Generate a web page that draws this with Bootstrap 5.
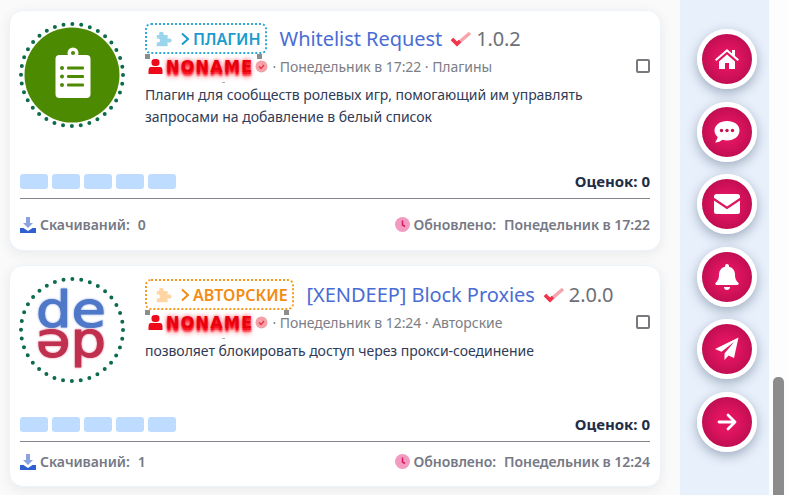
<!DOCTYPE html>
<html lang="ru">
<head>
    <meta charset="UTF-8">
    <meta name="viewport" content="width=device-width, initial-scale=1.0">
    <title>Ресурсы</title>
    <link href="https://cdn.jsdelivr.net/npm/bootstrap@5.3.0/dist/css/bootstrap.min.css" rel="stylesheet">
    <style>
        html, body { height: 100%; overflow: hidden; }
        body {
            background: #fdfdfd;
            font-family: "Noto Sans", "Open Sans", sans-serif;
            font-size: 14px;
            color: #2e3a55;
        }
        .page-wrap { height: 495px; }
        .res-col { width: 680px; padding: 10px 19px 0 9px; background: #fafafa; }
        .res-card {
            border: 1px solid #edf3fd;
            border-radius: 14px;
            box-shadow: 0 3px 12px rgba(60, 70, 90, .09);
            padding: 10px 10px 15px 10px;
            margin-bottom: 14px;
            background: #fff;
        }
        .res-card.first { height: 241px; }
        .res-card.second { height: 222px; padding-bottom: 14px; }
        .res-logo { width: 108px; height: 108px; flex: none; margin-left: -2px; }
        .res-main { margin-left: 19px; margin-top: 2px; min-width: 0; }
        .second .res-main { margin-top: 3px; }
        .logo-blue { filter: drop-shadow(0 0 1px #8fabe6); }
        .logo-red { filter: drop-shadow(0 0 1px #e67f96); }
        .type-tag {
            position: relative;
            height: 31px;
            padding: 0 4px 0 8px;
            border: 2px dotted #2ea8d6;
            border-radius: 6px;
            font-size: 16px;
            font-weight: 600;
            color: #1b9ccd;
            white-space: nowrap;
        }
        .type-tag.orange { border-color: #f7991f; color: #f28c13; }
        .handle { position: absolute; width: 5px; height: 5px; background: #8d8d8d; bottom: -7px; }
        .handle.l { left: -2px; }
        .handle.r { right: 3px; }
        .res-title { font-size: 20px; color: #4a6cd4; margin-left: 13px; white-space: nowrap; line-height: 28px; letter-spacing: -.05px; }
        .res-ver { font-size: 20px; color: #6c6f76; margin-left: 4px; line-height: 28px; letter-spacing: -.1px; }
        .meta-row { height: 24px; color: #7b7e85; font-size: 14px; letter-spacing: -.05px; }
        .user-ico { margin: 0 3px; flex: none; }
        .verify-ico { margin-left: 2px; flex: none; }
        .nick {
            position: relative;
            font-family: "DejaVu Sans", sans-serif;
            font-weight: 700;
            font-size: 16px;
            letter-spacing: 1.3px;
            color: #e8000c;
            line-height: 1;
            margin-top: 2px;
            text-shadow: 0 0 4px #ff3040, 0 2px 1px #f5000f, 0 4px 2px rgba(255, 0, 15, .75), 0 6px 4px rgba(255, 20, 30, .4);
        }
        .nick::after { content: ""; position: absolute; left: 56px; bottom: -8px; width: 3px; height: 1px; background: #a9a9a9; }
        .res-desc { margin: 6px 0 0; line-height: 22px; width: 470px; color: #2f3b57; letter-spacing: -.04px; }
        .star-box { width: 28px; height: 15px; background: #bddcff; border-radius: 3px; }
        .rate-text { font-weight: 700; font-size: 15px; line-height: 21px; color: #232d47; }
        .res-line { border: 0; border-top: 1px solid #85858d; opacity: 1; margin: 6px 0 0; }
        .foot-row { color: #757985; font-weight: 600; margin-top: 15px; line-height: 21px; letter-spacing: -.05px; }
        .second .foot-row { margin-top: 9px; }
        .foot-row b { font-weight: 600; }
        .res-check.form-check-input {
            width: 14px; height: 14px; margin: 0;
            border: 2px solid #77797e; border-radius: 2px;
        }
        .side-col { width: 89px; background: #e8f0fb; padding: 29px 0 0 17px; }
        .round-btn {
            width: 60px; height: 60px;
            border: 5px solid #fff;
            border-radius: 50%;
            background: radial-gradient(circle, #e0145f 30%, #ab0a49 100%);
            box-shadow: 0 4px 12px rgba(50, 70, 100, .4);
            margin-bottom: 12.6px;
            padding: 0;
        }
        .scroll-col { width: 19px; padding: 377px 4px 0; }
        .scroll-thumb { height: 130px; background: #8c8c8c; border-radius: 5px; }
    </style>
</head>
<body>
<div class="page-wrap d-flex">
    <div class="res-col">

        <div class="card res-card first">
            <div class="d-flex">
                <svg class="res-logo" viewBox="0 0 108 108">
                    <circle cx="54" cy="54" r="51" fill="none" stroke="#0b6b4b" stroke-width="4" stroke-linecap="round" stroke-dasharray="0 8.9"/>
                    <circle cx="54" cy="54" r="47.5" fill="#4c8a02"/>
                    <rect x="37.5" y="34" width="35" height="43" rx="4" fill="#fff"/>
                    <circle cx="55" cy="32" r="5.5" fill="#fff"/>
                    <circle cx="55" cy="32" r="2" fill="#4c8a02"/>
                    <g fill="#4c8a02">
                        <circle cx="44" cy="47" r="2"/><rect x="49" y="45.6" width="17" height="2.8" rx="1"/>
                        <circle cx="44" cy="55.5" r="2"/><rect x="49" y="54.1" width="17" height="2.8" rx="1"/>
                        <circle cx="44" cy="64" r="2"/><rect x="49" y="62.6" width="17" height="2.8" rx="1"/>
                    </g>
                </svg>
                <div class="res-main flex-grow-1">
                    <div class="d-flex align-items-center">
                        <span class="type-tag d-inline-flex align-items-center">
                            <svg width="18" height="18" viewBox="0 0 20 20" class="me-2"><path fill="#9ad5ec" d="M7 2c2 0 3 1.2 2.5 3.500H14v4.200c2.500-.8 4.500 0 4.500 2s-2 2.800-4.500 2V18H2v-4.500c2 .7 3.500 0 3.500-2S4 9 2 9.600V5.500h2.800C4 3.200 5 2 7 2z"/></svg>
                            <svg width="8" height="14" viewBox="0 0 8 14" class="me-1"><path d="M1 1.500 7 7l-6 5.500" fill="none" stroke="#1b9ccd" stroke-width="2"/></svg>
                            ПЛАГИН
                            <i class="handle l"></i><i class="handle r"></i>
                        </span>
                        <span class="res-title">Whitelist Request</span>
                        <svg width="22" height="16" viewBox="0 0 22 16" class="ms-2"><path d="M2 8l5 5L20 2" fill="none" stroke="#f6a5ad" stroke-width="3.5"/><path d="M2 8l5 5 3-3" fill="none" stroke="#f2344a" stroke-width="3.5"/></svg>
                        <span class="res-ver">1.0.2</span>
                    </div>
                    <div class="meta-row d-flex align-items-center">
                        <svg width="15" height="15" viewBox="0 0 15 15" class="user-ico"><rect x="3.5" y="0" width="8" height="7" rx="3.2" fill="#ee0a1a"/><path fill="#ee0a1a" d="M2.500 8h10c1 0 2 1.500 2 3v4H.5v-4c0-1.500 1-3 2-3z"/></svg>
                        <span class="nick">NONAME</span>
                        <svg width="13" height="13" viewBox="0 0 13 13" class="verify-ico"><circle cx="6.5" cy="6.5" r="6" fill="#f3a0a6"/><path d="M4 6.500l2 2 3-3.500" fill="none" stroke="#e8303f" stroke-width="1.3"/></svg>
                        <span class="ms-1">· Понедельник в 17:22 · Плагины</span>
                        <input class="form-check-input res-check ms-auto" type="checkbox">
                    </div>
                    <p class="res-desc">Плагин для сообществ ролевых игр, помогающий им управлять запросами на добавление в белый список</p>
                </div>
            </div>
            <div class="mt-auto">
                <div class="d-flex justify-content-between align-items-center">
                    <div class="d-flex gap-1">
                        <span class="star-box"></span><span class="star-box"></span><span class="star-box"></span><span class="star-box"></span><span class="star-box"></span>
                    </div>
                    <span class="rate-text">Оценок: 0</span>
                </div>
                <hr class="res-line">
                <div class="foot-row d-flex justify-content-between align-items-center">
                    <span class="d-flex align-items-center">
                        <svg width="16" height="16" viewBox="0 0 16 16" class="me-1"><path fill="#8ca3e0" d="M6 0h4v6h3L8 11 3 6h3z"/><path fill="#2f5fd0" d="M0 11h3.500L8 14l4.500-3H16v5H0z"/></svg>
                        Скачиваний: <b class="ms-2">0</b>
                    </span>
                    <span class="d-flex align-items-center">
                        <svg width="15" height="15" viewBox="0 0 15 15" class="me-1"><circle cx="7.5" cy="7.5" r="7.5" fill="#f29ac0"/><path d="M7.500 3.500v4.500l2.500 1.500" fill="none" stroke="#d81b60" stroke-width="1.5"/></svg>
                        Обновлено: <b class="ms-2">Понедельник в 17:22</b>
                    </span>
                </div>
            </div>
        </div>

        <div class="card res-card second">
            <div class="d-flex">
                <svg class="res-logo" viewBox="0 0 108 108">
                    <circle cx="54" cy="54" r="51" fill="none" stroke="#0b6b4b" stroke-width="4" stroke-linecap="round" stroke-dasharray="0 8.9"/>
                    <g font-family="DejaVu Sans, sans-serif" font-size="50" stroke-width="1.2">
                        <text class="logo-blue" transform="translate(18 51) scale(1.12 1)" fill="#4f78c8" stroke="#4f78c8">de</text>
                        <text class="logo-red" transform="translate(18 81) scale(1.12 1)" fill="#c0304f" stroke="#c0304f">әp</text>
                    </g>
                </svg>
                <div class="res-main flex-grow-1">
                    <div class="d-flex align-items-center">
                        <span class="type-tag orange d-inline-flex align-items-center">
                            <svg width="18" height="18" viewBox="0 0 20 20" class="me-2"><path fill="#ffd5a3" d="M7 2c2 0 3 1.200 2.500 3.500H14v4.200c2.500-.8 4.500 0 4.500 2s-2 2.800-4.500 2V18H2v-4.500c2 .7 3.500 0 3.500-2S4 9 2 9.600V5.500h2.800C4 3.200 5 2 7 2z"/></svg>
                            <svg width="8" height="14" viewBox="0 0 8 14" class="me-1"><path d="M1 1.500 7 7l-6 5.500" fill="none" stroke="#f28c13" stroke-width="2"/></svg>
                            АВТОРСКИЕ
                            <i class="handle l"></i><i class="handle r"></i>
                        </span>
                        <span class="res-title">[XENDEEP] Block Proxies</span>
                        <svg width="22" height="16" viewBox="0 0 22 16" class="ms-2"><path d="M2 8l5 5L20 2" fill="none" stroke="#f6a5ad" stroke-width="3.5"/><path d="M2 8l5 5 3-3" fill="none" stroke="#f2344a" stroke-width="3.5"/></svg>
                        <span class="res-ver">2.0.0</span>
                    </div>
                    <div class="meta-row d-flex align-items-center">
                        <svg width="15" height="15" viewBox="0 0 15 15" class="user-ico"><rect x="3.5" y="0" width="8" height="7" rx="3.2" fill="#ee0a1a"/><path fill="#ee0a1a" d="M2.500 8h10c1 0 2 1.500 2 3v4H.5v-4c0-1.500 1-3 2-3z"/></svg>
                        <span class="nick">NONAME</span>
                        <svg width="13" height="13" viewBox="0 0 13 13" class="verify-ico"><circle cx="6.5" cy="6.5" r="6" fill="#f3a0a6"/><path d="M4 6.500l2 2 3-3.500" fill="none" stroke="#e8303f" stroke-width="1.3"/></svg>
                        <span class="ms-1">· Понедельник в 12:24 · Авторские</span>
                        <input class="form-check-input res-check ms-auto" type="checkbox">
                    </div>
                    <p class="res-desc">позволяет блокировать доступ через прокси-соединение</p>
                </div>
            </div>
            <div class="mt-auto">
                <div class="d-flex justify-content-between align-items-center">
                    <div class="d-flex gap-1">
                        <span class="star-box"></span><span class="star-box"></span><span class="star-box"></span><span class="star-box"></span><span class="star-box"></span>
                    </div>
                    <span class="rate-text">Оценок: 0</span>
                </div>
                <hr class="res-line">
                <div class="foot-row d-flex justify-content-between align-items-center">
                    <span class="d-flex align-items-center">
                        <svg width="16" height="16" viewBox="0 0 16 16" class="me-1"><path fill="#8ca3e0" d="M6 0h4v6h3L8 11 3 6h3z"/><path fill="#2f5fd0" d="M0 11h3.500L8 14l4.500-3H16v5H0z"/></svg>
                        Скачиваний: <b class="ms-2">1</b>
                    </span>
                    <span class="d-flex align-items-center">
                        <svg width="15" height="15" viewBox="0 0 15 15" class="me-1"><circle cx="7.5" cy="7.5" r="7.5" fill="#f29ac0"/><path d="M7.500 3.500v4.500l2.500 1.500" fill="none" stroke="#d81b60" stroke-width="1.5"/></svg>
                        Обновлено: <b class="ms-2">Понедельник в 12:24</b>
                    </span>
                </div>
            </div>
        </div>
    </div>

    <div class="side-col d-flex flex-column align-items-start">
        <button class="round-btn btn d-flex align-items-center justify-content-center" aria-label="Главная">
            <svg width="26" height="22" viewBox="0 0 26 22"><path fill="#fff" d="M13 1 1 11.500l1.300 1.500L13 3.700 23.700 13l1.300-1.500-4-3.500V2h-3v3.400zM5 13.500V21h6v-6h4v6h6v-7.500L13 6.500z"/></svg>
        </button>
        <button class="round-btn btn d-flex align-items-center justify-content-center" aria-label="Сообщения">
            <svg width="26" height="24" viewBox="0 0 26 24"><path fill="#fff" d="M13 1C6 1 .5 5.200.5 10.500c0 2.500 1.200 4.700 3.200 6.400C3.300 19 2 21 1 22.500c3 0 5.700-1.200 7.500-2.700 1.400.4 2.900.7 4.500.7 7 0 12.500-4.300 12.500-10S20 1 13 1z"/><g fill="#c9104f"><circle cx="7.5" cy="10.5" r="1.7"/><circle cx="13" cy="10.5" r="1.7"/><circle cx="18.5" cy="10.5" r="1.7"/></g></svg>
        </button>
        <button class="round-btn btn d-flex align-items-center justify-content-center" aria-label="Почта">
            <svg width="26" height="20" viewBox="0 0 26 20"><path fill="#fff" d="M2.500 0h21A2.500 2.500 0 0 1 26 2.500v1.200l-13 8.800L0 3.700V2.500A2.500 2.500 0 0 1 2.500 0zM0 6.500l13 8.700 13-8.700v11A2.500 2.500 0 0 1 23.500 20h-21A2.500 2.500 0 0 1 0 17.500z"/></svg>
        </button>
        <button class="round-btn btn d-flex align-items-center justify-content-center" aria-label="Уведомления">
            <svg width="24" height="26" viewBox="0 0 24 26"><path fill="#fff" d="M12 0a2 2 0 0 0-2 2v.7C6 3.600 4 7 4 10.500c0 4.500-1.500 6.500-3.300 8.300-.9 1-.2 2.200 1 2.200h20.600c1.200 0 1.900-1.200 1-2.200C21.500 17 20 15 20 10.500c0-3.500-2-6.900-6-7.800V2a2 2 0 0 0-2-2zM9 23h6c0 2-1.300 3-3 3s-3-1-3-3z"/></svg>
        </button>
        <button class="round-btn btn d-flex align-items-center justify-content-center" aria-label="Отправить">
            <svg width="24" height="24" viewBox="0 0 24 24"><path fill="#fff" d="M23.500.5 0 12l6.500 2.800L19 5 9.500 16.500v6.500l4-4.500 5.500 2.500z"/></svg>
        </button>
        <button class="round-btn btn d-flex align-items-center justify-content-center" aria-label="Дальше">
            <svg width="20" height="18" viewBox="0 0 20 18"><path fill="none" stroke="#fff" stroke-width="2.8" stroke-linecap="round" stroke-linejoin="round" d="M2 9h16M11 2l7 7-7 7"/></svg>
        </button>
    </div>

    <div class="scroll-col">
        <div class="scroll-thumb"></div>
    </div>
</div>
<script src="https://cdn.jsdelivr.net/npm/bootstrap@5.3.0/dist/js/bootstrap.bundle.min.js"></script>
</body>
</html>
